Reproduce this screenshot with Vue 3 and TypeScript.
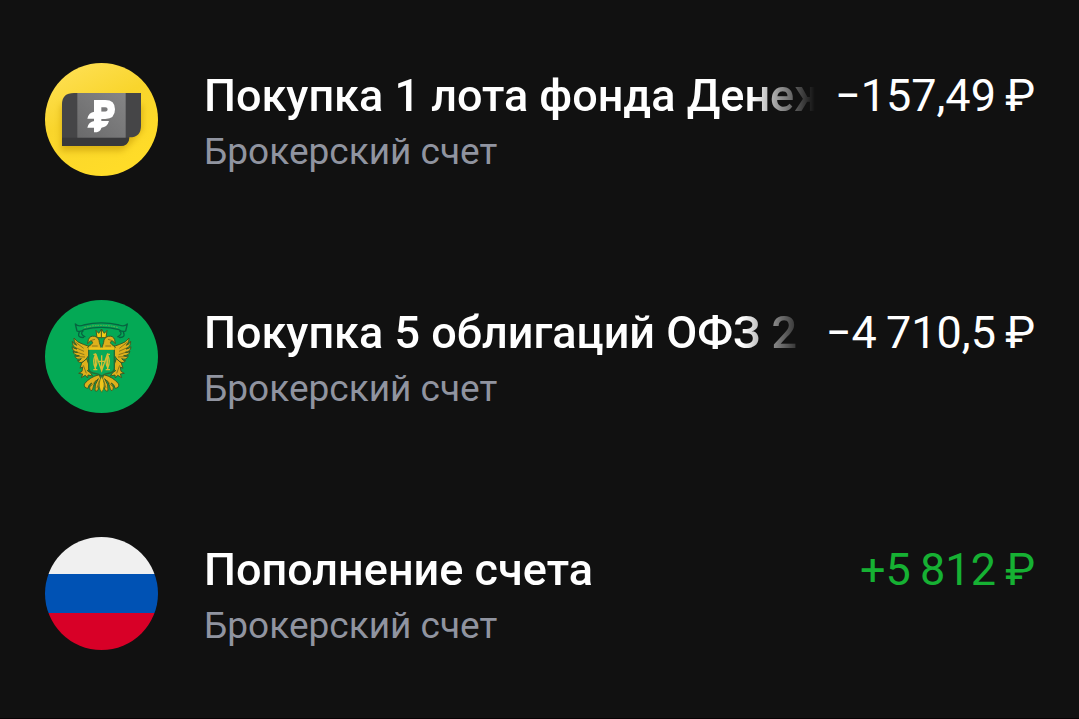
<script setup lang="ts">
type Icon = 'fund' | 'bond' | 'flag'

interface Operation {
  icon: Icon
  title: string
  account: string
  amount: string
  income: boolean
}

const operations: Operation[] = [
  { icon: 'fund', title: 'Покупка 1 лота фонда Денеж', account: 'Брокерский счет', amount: '−157,49\u2009₽', income: false },
  { icon: 'bond', title: 'Покупка 5 облигаций ОФЗ 2', account: 'Брокерский счет', amount: '−4\u2009710,5\u2009₽', income: false },
  { icon: 'flag', title: 'Пополнение счета', account: 'Брокерский счет', amount: '+5\u2009812\u2009₽', income: true },
]
</script>

<template>
  <main class="screen">
    <ul class="list">
      <li v-for="op in operations" :key="op.title" class="row">
        <svg v-if="op.icon === 'fund'" class="avatar" viewBox="30 24 339 339" aria-hidden="true">
          <defs>
            <linearGradient id="gold" x1="0" y1="0" x2="0.5" y2="1">
              <stop offset="0" stop-color="#ffe25c" />
              <stop offset="0.5" stop-color="#f9d52c" />
              <stop offset="1" stop-color="#ffdc28" />
            </linearGradient>
            <linearGradient id="note" x1="0" y1="1" x2="1" y2="0">
              <stop offset="0" stop-color="#6a6a6b" />
              <stop offset="1" stop-color="#858586" />
            </linearGradient>
            <filter id="soft" x="-20%" y="-20%" width="140%" height="150%">
              <feGaussianBlur stdDeviation="9" />
            </filter>
          </defs>
          <circle cx="199.500" cy="193.500" r="169.500" fill="url(#gold)" />
          <path d="M78 150H322V225L285 268L260 288H78Z" fill="#b98d00" opacity="0.5" filter="url(#soft)" />
          <path d="M81 148Q81 114 117 114H318V212Q318 247 283 247Q281 273 256 273H81Z" fill="#454547" />
          <path d="M81 248H283Q281 273 256 273H81Z" fill="#39393b" />
          <rect x="127" y="114" width="145" height="134" fill="url(#note)" />
          <path d="M188 220V146H211Q229 146 229 163Q229 181 211 181H190" fill="none" stroke="#ffffff" stroke-width="22" />
          <path d="M157 191Q161 172 178 170H222Q217 190 198 191ZM157 218Q161 200 178 198H222Q217 217 199 218Q197 232 177 232V218Z" fill="#ffffff" />
        </svg>

        <svg v-else-if="op.icon === 'bond'" class="avatar" viewBox="30 24 339 339" aria-hidden="true">
          <circle cx="199.500" cy="193.500" r="169.500" fill="#04a955" />
          <g fill="none" stroke="#076440" stroke-width="4" stroke-linejoin="round">
            <path d="M121 96Q130 105 146 99Q199 86 252 99Q268 105 277 96L272 117Q263 121 252 113Q199 99 146 113Q135 121 126 117Z" />
            <path d="M133 119Q125 139 147 136M265 119Q273 139 251 136M145 116Q132 126 151 135M253 116Q266 126 247 135" />
            <path d="M148 107Q199 93 250 107" stroke="#6eaa47" stroke-width="3" stroke-dasharray="5 3" />
          </g>
          <g v-for="side in ['', 'translate(399 0) scale(-1 1)']" :key="side" :transform="side" fill="#deb01c" stroke="#3c5c24" stroke-width="3" stroke-linejoin="round">
            <path d="M162 163L145 157Q125 151 117 138Q115 151 125 160Q115 156 112 148Q111 163 126 171Q116 170 111 164Q112 179 128 181Q120 183 114 178Q117 191 133 191Q126 196 119 191Q124 206 139 200Q134 208 127 206Q137 218 151 205L162 189Z" />
            <path d="M197 174L164 174L158 165L168 158Q178 150 167 146L158 155L160 143Q165 130 179 133Q193 136 193 151L197 163Z" />
            <path d="M155 200L140 213L135 229L143 225L141 238L131 244L143 246L139 257L151 250L158 258L159 249L173 252L165 241L157 236L165 228Z" />
            <path d="M193 248Q164 255 148 276Q146 288 159 289Q160 278 170 273Q159 289 168 296Q174 296 175 284Q177 270 190 260Q177 279 180 296Q188 301 191 287L197 261Z" />
            <path d="M186 137L183 115L191 124L200 111V137Z" fill="#f2ca15" />
          </g>
          <path d="M200 253Q188 274 195 292L200 301L205 292Q212 274 200 253Z" fill="#efc51b" stroke="#3c6b2b" stroke-width="2" />
          <path d="M161 172H238V228Q238 240 224 243Q208 245 200 252Q191 245 175 243Q161 240 161 228Z" fill="#09a957" stroke="#286b32" stroke-width="4" />
          <path d="M160 170H239" stroke="#efc51b" stroke-width="7" />
          <g fill="none" stroke="#d8bd32" stroke-width="4">
            <path d="M181 184V232M175 233H187M175 187H183L200 236L217 187H225M218 184V232M212 233H225M200 190V238M192 208H208" />
            <path d="M181 190Q171 208 181 227M218 190Q228 208 218 227M181 190Q191 208 181 227M218 190Q208 208 218 227" />
          </g>
          <g fill="none" stroke="#5e5a18" stroke-width="2">
            <path d="M121 150L146 169M120 166L147 178M124 180L148 188M130 194L150 195M278 150L253 169M279 166L252 178M275 180L251 188M269 194L249 195M167 283L184 264M186 288L193 266M232 283L215 264M213 288L206 266M145 220L154 244M254 220L245 244M169 145L180 142M230 145L219 142M171 162H188M211 162H228" />
          </g>
        </svg>

        <svg v-else class="avatar" viewBox="0 0 113 113" aria-hidden="true">
          <defs>
            <clipPath id="disc"><circle cx="56.500" cy="56.500" r="56.500" /></clipPath>
          </defs>
          <g clip-path="url(#disc)">
            <rect width="113" height="37" fill="#f0f0f0" />
            <rect y="37" width="113" height="39" fill="#0052b4" />
            <rect y="76" width="113" height="37" fill="#d80027" />
          </g>
        </svg>

        <div class="details">
          <div class="headline">
            <span class="title">{{ op.title }}</span>
            <span class="amount" :class="{ income: op.income }">{{ op.amount }}</span>
          </div>
          <span class="account">{{ op.account }}</span>
        </div>
      </li>
    </ul>
  </main>
</template>

<style>
body {
  margin: 0;
  background: #111111;
}
</style>

<style scoped>
.screen {
  box-sizing: border-box;
  min-height: 100vh;
  background: #111111;
  border-bottom: 1px solid #080305;
  font-family: Roboto, "Liberation Sans", sans-serif;
  color: #ffffff;
}

.list {
  display: flex;
  flex-direction: column;
  gap: 120px;
  margin: 0;
  padding: 63px 44px 60px 45px;
  list-style: none;
}

.row {
  display: flex;
  align-items: flex-start;
  gap: 46px;
}

.avatar {
  display: block;
  flex: none;
  width: 113px;
  height: 113px;
}

.details {
  display: flex;
  flex: 1;
  flex-direction: column;
  min-width: 0;
  padding-top: 5px;
}

.headline {
  display: flex;
  gap: 20px;
  line-height: 56px;
  font-size: 45px;
  white-space: nowrap;
}

.title {
  flex: 1;
  min-width: 0;
  overflow: hidden;
  font-weight: 500;
  mask-image: linear-gradient(to left, transparent, #000000 64px);
}

.amount {
  flex: none;
}

.income {
  color: #16b133;
}

.account {
  line-height: 56px;
  font-size: 37px;
  color: #9094a0;
}
</style>
